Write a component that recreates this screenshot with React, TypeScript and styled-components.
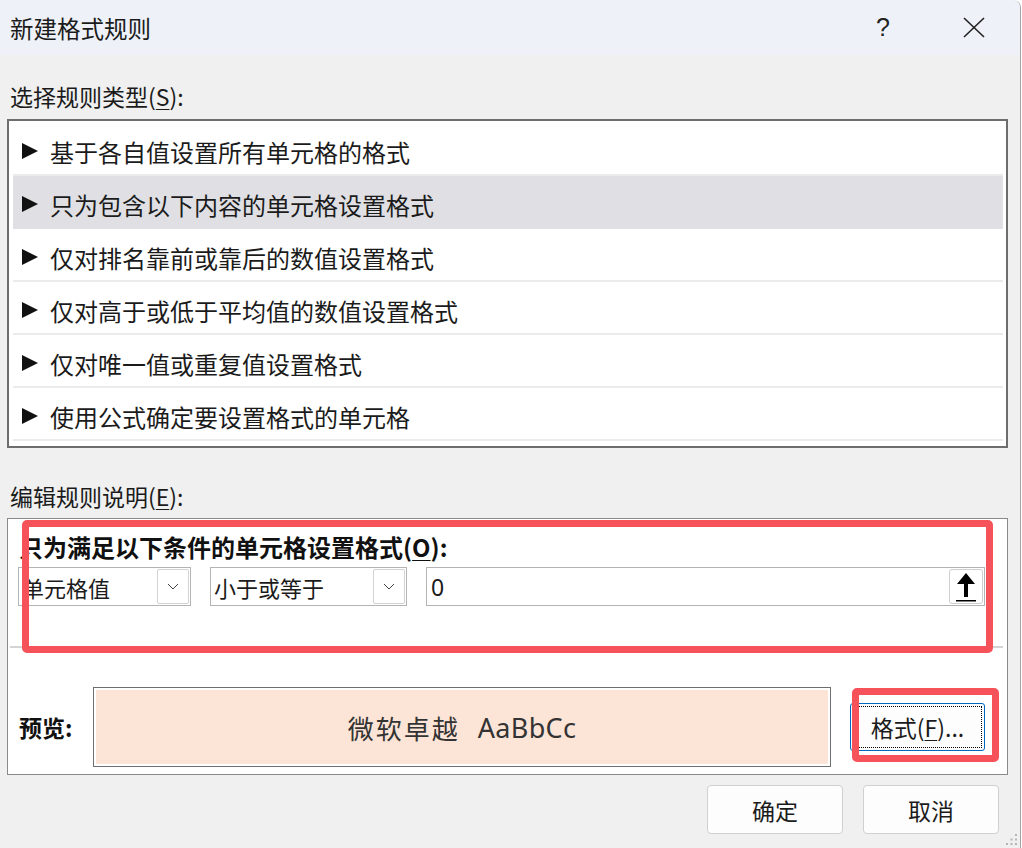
import styled, { createGlobalStyle } from "styled-components"

const GlobalStyle = createGlobalStyle`
  html, body {
    margin: 0;
    padding: 0;
    background: #ffffff;
  }
  body {
    font-family: "Noto Sans CJK SC", "Noto Sans", sans-serif;
    color: #1b1b1b;
  }
`

const rules = [
  "基于各自值设置所有单元格的格式",
  "只为包含以下内容的单元格设置格式",
  "仅对排名靠前或靠后的数值设置格式",
  "仅对高于或低于平均值的数值设置格式",
  "仅对唯一值或重复值设置格式",
  "使用公式确定要设置格式的单元格",
]

const Window = styled.div`
  position: relative;
  width: 1021px;
  height: 848px;
  box-sizing: border-box;
  background: #f0f0f0;
  border-right: 1px solid #a3a3a3;
  border-top-right-radius: 8px;
  overflow: hidden;
  display: flex;
  flex-direction: column;
`

const TitleBar = styled.div`
  height: 55px;
  flex-shrink: 0;
  display: flex;
  align-items: center;
  padding-left: 10px;
  background: #eef2f8;
`

const Title = styled.div`
  flex: 1;
  font-size: 23.5px;
  line-height: 30px;
  padding-top: 1px;
`

const TitleButton = styled.div<{ $w: number }>`
  width: ${(p) => p.$w}px;
  height: 55px;
  display: flex;
  align-items: center;
  justify-content: center;
  font-family: "Liberation Sans", sans-serif;
  font-size: 25px;
  color: #222;
`

const SectionLabel = styled.div<{ $h: number; $top: number }>`
  height: ${(p) => p.$h}px;
  box-sizing: border-box;
  padding: ${(p) => p.$top}px 10px 0;
  font-size: 23px;
  line-height: 30px;
  flex-shrink: 0;
`

const Key = styled.span`
  text-decoration: underline;
  text-underline-offset: 3px;
  text-decoration-thickness: 1px;
`

const RuleList = styled.div`
  margin-left: 7px;
  width: 1001px;
  height: 329px;
  flex-shrink: 0;
  box-sizing: border-box;
  border: 2px solid #6d6d6d;
  background: #fff;
  padding: 2px 3px 0 4px;
  overflow: hidden;
`

const RuleRow = styled.div<{ $active?: boolean }>`
  height: 53px;
  box-sizing: border-box;
  display: flex;
  align-items: center;
  gap: 12px;
  padding: 5px 0 0 9px;
  font-size: 24px;
  background: ${(p) => (p.$active ? "#e0e0e4" : "#fff")};
  border-bottom: 2px solid ${(p) => (p.$active ? "#e0e0e4" : "#ebebeb")};
`

const LowerPanel = styled.div`
  position: relative;
  margin-left: 7px;
  width: 1001px;
  height: 257px;
  flex-shrink: 0;
  box-sizing: border-box;
  border: 1px solid #8a8a8a;
  background: #fff;
  display: flex;
  flex-direction: column;
`

const Heading = styled.div`
  padding: 14px 0 0 11px;
  font-size: 24px;
  line-height: 28px;
  font-weight: 700;
  color: #111;
`

const ControlsRow = styled.div`
  margin-top: 6px;
  padding-left: 10px;
  display: flex;
  gap: 19px;
  height: 39px;
`

const Select = styled.div<{ $w: number }>`
  width: ${(p) => p.$w}px;
  height: 39px;
  box-sizing: border-box;
  border: 1px solid #b4b4b4;
  background: #fff;
  display: flex;
  align-items: center;
  padding-left: 3px;
  font-size: 22px;
`

const FieldText = styled.span`
  flex: 1;
  white-space: nowrap;
`

const DropButton = styled.div`
  width: 32px;
  height: 35px;
  margin-right: 1px;
  box-sizing: border-box;
  border: 1px solid #d3d3d3;
  border-radius: 2px;
  display: flex;
  align-items: center;
  justify-content: center;
`

const ValueInput = styled.div`
  width: 559px;
  height: 39px;
  box-sizing: border-box;
  border: 1px solid #b4b4b4;
  display: flex;
  align-items: center;
  padding-left: 4px;
  font-family: "Noto Sans", sans-serif;
  font-size: 23px;
`

const RefButton = styled.div`
  width: 34px;
  height: 35px;
  margin-right: 1px;
  box-sizing: border-box;
  border: 1px solid #cfcfcf;
  border-radius: 3px;
  background: #fff;
  display: flex;
  align-items: center;
  justify-content: center;
`

const Separator = styled.div`
  margin: 40px 4px 0 2px;
  height: 2px;
  background: #d4d4d4;
`

const PreviewRow = styled.div`
  margin-top: 39px;
  padding-left: 11px;
  display: flex;
  align-items: center;
  height: 80px;
`

const PreviewLabel = styled.div`
  width: 74px;
  font-size: 23px;
  font-weight: 700;
  color: #111;
`

const PreviewBox = styled.div`
  width: 738px;
  height: 80px;
  box-sizing: border-box;
  border: 1px solid #6f6f6f;
  padding: 2px;
  background: #fce4d6;
  background-clip: content-box;
  box-shadow: inset 0 0 0 2px #fff;
  display: flex;
  align-items: center;
  justify-content: center;
  font-size: 26px;
  color: #333;
  gap: 18px;
`

const PreviewCjk = styled.span`
  letter-spacing: 2px;
`

const PreviewLatin = styled.span`
  font-family: "Noto Sans", sans-serif;
  font-size: 27px;
  letter-spacing: 0.3px;
`

const FormatButton = styled.div`
  position: relative;
  margin-left: 19px;
  width: 135px;
  height: 48px;
  box-sizing: border-box;
  border: 1px solid #0067c0;
  border-radius: 3px;
  background: #fdfdfd;
  display: flex;
  align-items: center;
  justify-content: center;
  font-size: 23px;
  &::after {
    content: "";
    position: absolute;
    inset: 2px;
    border: 1px dotted #000;
  }
`

const Highlight = styled.div<{ $x: number; $y: number; $w: number; $h: number }>`
  position: absolute;
  left: ${(p) => p.$x}px;
  top: ${(p) => p.$y}px;
  width: ${(p) => p.$w}px;
  height: ${(p) => p.$h}px;
  box-sizing: border-box;
  border: 7px solid #f5525a;
  border-radius: 5px;
  pointer-events: none;
`

const Footer = styled.div`
  margin-top: 10px;
  padding-right: 21px;
  display: flex;
  justify-content: flex-end;
  gap: 20px;
`

const DialogButton = styled.div`
  width: 136px;
  height: 49px;
  box-sizing: border-box;
  border: 1px solid #d0d0d0;
  border-radius: 4px;
  background: #fdfdfd;
  display: flex;
  align-items: center;
  justify-content: center;
  font-size: 23px;
`

const Grip = styled.svg`
  position: absolute;
  right: 2px;
  bottom: 2px;
`

const Chevron = () => (
  <svg width="12" height="7" viewBox="0 0 12 7">
    <polyline points="1,1 6,6 11,1" fill="none" stroke="#444" strokeWidth="1" />
  </svg>
)

const Bullet = () => (
  <svg width="16" height="16" viewBox="0 0 16 16">
    <polygon points="0,0 16,8 0,16" fill="#111" />
  </svg>
)

export default function App() {
  return (
    <>
      <GlobalStyle />
      <Window>
        <TitleBar>
          <Title>新建格式规则</Title>
          <TitleButton $w={90}>?</TitleButton>
          <TitleButton $w={92}>
            <svg width="22" height="21" viewBox="0 0 22 21">
              <line x1="1" y1="1" x2="21" y2="20" stroke="#222" strokeWidth="1.6" />
              <line x1="21" y1="1" x2="1" y2="20" stroke="#222" strokeWidth="1.6" />
            </svg>
          </TitleButton>
        </TitleBar>

        <SectionLabel $h={64} $top={26}>
          选择规则类型(<Key>S</Key>):
        </SectionLabel>
        <RuleList>
          {rules.map((r, i) => (
            <RuleRow key={r} $active={i === 1}>
              <Bullet />
              <span>{r}</span>
            </RuleRow>
          ))}
        </RuleList>

        <SectionLabel $h={70} $top={33}>
          编辑规则说明(<Key>E</Key>):
        </SectionLabel>
        <LowerPanel>
          <Heading>
            只为满足以下条件的单元格设置格式(<Key>O</Key>):
          </Heading>
          <ControlsRow>
            <Select $w={173}>
              <FieldText>单元格值</FieldText>
              <DropButton>
                <Chevron />
              </DropButton>
            </Select>
            <Select $w={197}>
              <FieldText>小于或等于</FieldText>
              <DropButton>
                <Chevron />
              </DropButton>
            </Select>
            <ValueInput>
              <FieldText>0</FieldText>
              <RefButton>
                <svg width="20" height="30" viewBox="0 0 20 30">
                  <polygon points="10,1 19,12 12,12 12,25 8,25 8,12 1,12" fill="#000" />
                  <rect x="0" y="28" width="20" height="1.5" fill="#000" />
                </svg>
              </RefButton>
            </ValueInput>
          </ControlsRow>
          <Separator />
          <PreviewRow>
            <PreviewLabel>预览:</PreviewLabel>
            <PreviewBox>
              <PreviewCjk>微软卓越</PreviewCjk>
              <PreviewLatin>AaBbCc</PreviewLatin>
            </PreviewBox>
            <FormatButton>
              格式(<Key>F</Key>)...
            </FormatButton>
          </PreviewRow>

          <Highlight $x={14} $y={1} $w={971} $h={133} />
          <Highlight $x={844} $y={169} $w={147} $h={74} />
        </LowerPanel>

        <Footer>
          <DialogButton>确定</DialogButton>
          <DialogButton>取消</DialogButton>
        </Footer>

        <Grip width="14" height="14" viewBox="0 0 14 14">
          {[
            [11, 2],
            [11, 6.5],
            [6.5, 6.5],
            [11, 11],
            [6.5, 11],
            [2, 11],
          ].map(([x, y]) => (
            <rect key={`${x}-${y}`} x={x} y={y} width="2" height="2" fill="#b5b5b5" />
          ))}
        </Grip>
      </Window>
    </>
  )
}
